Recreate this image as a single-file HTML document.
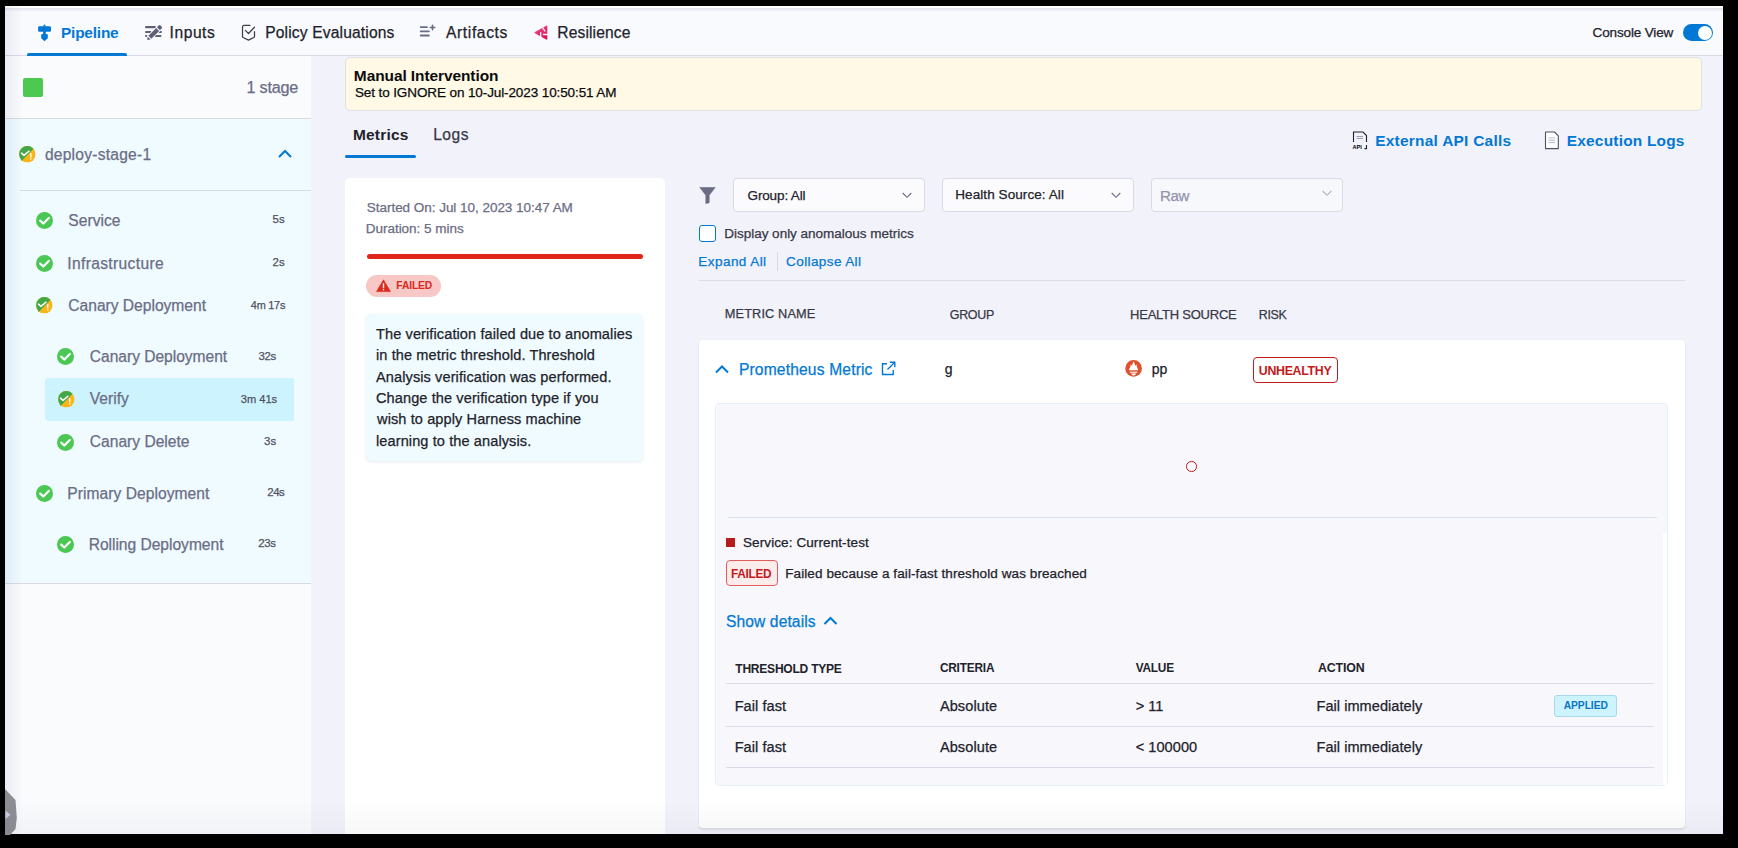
<!DOCTYPE html>
<html><head><meta charset="utf-8">
<style>
*{box-sizing:border-box;margin:0;padding:0}
html,body{width:1738px;height:848px;overflow:hidden;background:#000;font-family:"Liberation Sans",sans-serif}
.a{position:absolute;white-space:nowrap}
.r{position:absolute}
svg{position:absolute;overflow:visible}
</style></head>
<body>
<!-- app background -->
<div class="r" style="left:5px;top:6px;width:1718px;height:828px;background:#f2f2fb"></div>
<!-- nav -->
<div class="r" style="left:5px;top:6px;width:1718px;height:50px;background:#f9fafd;border-bottom:1px solid #d9dae5"></div>
<div class="r" style="left:5px;top:6px;width:1718px;height:2px;background:#fff"></div>
<div class="r" style="left:5px;top:8px;width:1718px;height:2.5px;background:linear-gradient(#e0e1ea,#f3f4f9)"></div>
<div class="r" style="left:27px;top:53px;width:100px;height:3px;background:#0278d5;border-radius:2px 2px 0 0"></div>
<!-- pipeline icon -->
<svg style="left:37px;top:24px" width="15" height="18" viewBox="0 0 15 18">
 <g fill="#0278d5">
 <path d="M5.7 2.4L7.45 0.3L9.2 2.4z"/>
 <rect x="1.1" y="2.2" width="12.9" height="5.6" rx="1.3"/>
 <rect x="6.1" y="7" width="2.7" height="4"/>
 <path d="M5.5 10H9.5Q10.8 10 10.8 11.3V14.3L7.45 17.3L4.2 14.3V11.3Q4.2 10 5.5 10z"/>
 </g>
</svg>
<!-- inputs icon -->
<svg style="left:144px;top:25px" width="19" height="16" viewBox="0 0 19 16">
 <g fill="#5f6078">
 <rect x="1" y="1" width="11" height="2.3" rx="1.1"/>
 <rect x="1" y="6" width="6.5" height="1.9" rx="0.9"/>
 <rect x="14.5" y="6" width="3.5" height="1.9" rx="0.9"/>
 <rect x="1" y="10" width="3" height="1.9" rx="0.9"/>
 <rect x="10.5" y="10" width="7" height="1.9" rx="0.9"/>
 </g>
 <g transform="translate(10.3 7.9) rotate(-45)" fill="#5f6078" stroke="#f9fafd" stroke-width="1.6" paint-order="stroke fill">
  <path d="M-10 0L-7.2 -2.1V2.1z"/>
  <rect x="-6.3" y="-2.1" width="11.2" height="4.2"/>
  <rect x="5.8" y="-2.1" width="3.8" height="4.2" rx="1"/>
 </g>
</svg>
<!-- policy icon -->
<svg style="left:241px;top:24px" width="16" height="18" viewBox="0 0 16 18">
 <path d="M9 1.4H3.2Q1.5 1.4 1.5 3.1V12.4Q1.5 13.1 2.2 13.5L7.5 16.1L12.8 13.5Q13.5 13.1 13.5 12.4V7.6" fill="none" stroke="#3d3e4d" stroke-width="1.25" stroke-linejoin="round" stroke-linecap="round"/>
 <path d="M4.3 6.4l3.2 3.1 6-6.3" fill="none" stroke="#3d3e4d" stroke-width="1.25" stroke-linecap="round" stroke-linejoin="round"/>
</svg>
<!-- artifacts icon -->
<svg style="left:419px;top:24px" width="18" height="14" viewBox="0 0 18 14">
 <g fill="#6b6d85">
 <rect x="0.8" y="2.3" width="8" height="1.8" rx="0.9"/>
 <rect x="0.8" y="6.4" width="10" height="1.8" rx="0.9"/>
 <rect x="0.8" y="10.6" width="10" height="1.8" rx="0.9"/>
 <rect x="12.7" y="0.5" width="1.6" height="6" rx="0.8"/>
 <rect x="10.5" y="2.7" width="6" height="1.6" rx="0.8"/>
 </g>
</svg>
<!-- resilience icon -->
<svg style="left:534px;top:25px" width="15" height="16" viewBox="0 0 15 16">
 <defs><linearGradient id="rg" x1="0" y1="0" x2="0.6" y2="1"><stop offset="0" stop-color="#f05a95"/><stop offset="1" stop-color="#dc0f55"/></linearGradient></defs>
 <path d="M12.2 0.7Q13.3 0.2 13.3 1.4V14Q13.3 15.2 12.2 14.6L0.9 8.3Q0 7.6 0.9 7z" fill="url(#rg)"/>
 <path d="M8.4 2.4L11.2 6.5M8.9 9.5H14M6.7 7.3V12.5" stroke="#f9fafd" stroke-width="1.3" fill="none"/>
</svg>
<!-- console toggle -->
<div class="r" style="left:1683px;top:24px;width:30px;height:17px;border-radius:9px;background:#0278d5"></div>
<div class="r" style="left:1697.5px;top:25.5px;width:14px;height:14px;border-radius:50%;background:#fff"></div>

<!-- left panel -->
<div class="r" style="left:5px;top:56px;width:306px;height:778px;background:#fafbfd"></div>
<div class="r" style="left:5px;top:118px;width:306px;height:1px;background:#d9dae5"></div>
<div class="r" style="left:5px;top:119px;width:306px;height:464px;background:#effbff"></div>
<div class="r" style="left:5px;top:583px;width:306px;height:1px;background:#d9dae5"></div>
<div class="r" style="left:20px;top:189.5px;width:291px;height:1.5px;background:#d4dde3"></div>
<div class="r" style="left:23px;top:78px;width:19.5px;height:19px;border-radius:2px;background:#4dc952"></div>
<!-- chevron up -->
<svg style="left:277px;top:148px" width="16" height="12" viewBox="0 0 16 12">
 <path d="M2 9l6-6 6 6" fill="none" stroke="#0278d5" stroke-width="2"/>
</svg>
<!-- verify highlight -->
<div class="r" style="left:44.5px;top:378px;width:249.5px;height:43px;background:#cdf4fe;border-radius:4px 0 0 4px"></div>
<svg style="left:19.10px;top:146.00px" width="16.6" height="16.6" viewBox="0 0 17 17"><defs><clipPath id="c27154"><circle cx="8.5" cy="8.5" r="8.5"/></clipPath></defs><g clip-path="url(#c27154)"><rect width="17" height="17" fill="#fcb519"/><path d="M0 0H17.6L0.6 17.6z" fill="#41a846"/></g><path d="M2.6 7.3l2.5 2.3 5.2-4.3" fill="none" stroke="#fff" stroke-width="1.5" stroke-linecap="round" stroke-linejoin="round"/><rect x="11.3" y="7.2" width="1.5" height="4.6" fill="#fff" opacity="0.9"/><rect x="11.3" y="12.6" width="1.5" height="1.4" fill="#fff" opacity="0.9"/></svg>
<svg style="left:36.00px;top:212.00px" width="17" height="17" viewBox="0 0 17 17"><circle cx="8.5" cy="8.5" r="8.5" fill="#4bc753"/><path d="M4.2 8.6l3.1 2.9 5.5-5.6" fill="none" stroke="#fff" stroke-width="2.2" stroke-linecap="round" stroke-linejoin="round"/></svg>
<svg style="left:36.00px;top:254.70px" width="17" height="17" viewBox="0 0 17 17"><circle cx="8.5" cy="8.5" r="8.5" fill="#4bc753"/><path d="M4.2 8.6l3.1 2.9 5.5-5.6" fill="none" stroke="#fff" stroke-width="2.2" stroke-linecap="round" stroke-linejoin="round"/></svg>
<svg style="left:36.20px;top:297.20px" width="16.6" height="16.6" viewBox="0 0 17 17"><defs><clipPath id="c44305"><circle cx="8.5" cy="8.5" r="8.5"/></clipPath></defs><g clip-path="url(#c44305)"><rect width="17" height="17" fill="#fcb519"/><path d="M0 0H17.6L0.6 17.6z" fill="#41a846"/></g><path d="M2.6 7.3l2.5 2.3 5.2-4.3" fill="none" stroke="#fff" stroke-width="1.5" stroke-linecap="round" stroke-linejoin="round"/><rect x="11.3" y="7.2" width="1.5" height="4.6" fill="#fff" opacity="0.9"/><rect x="11.3" y="12.6" width="1.5" height="1.4" fill="#fff" opacity="0.9"/></svg>
<svg style="left:57.30px;top:348.30px" width="17" height="17" viewBox="0 0 17 17"><circle cx="8.5" cy="8.5" r="8.5" fill="#4bc753"/><path d="M4.2 8.6l3.1 2.9 5.5-5.6" fill="none" stroke="#fff" stroke-width="2.2" stroke-linecap="round" stroke-linejoin="round"/></svg>
<svg style="left:57.70px;top:391.20px" width="16.6" height="16.6" viewBox="0 0 17 17"><defs><clipPath id="c66399"><circle cx="8.5" cy="8.5" r="8.5"/></clipPath></defs><g clip-path="url(#c66399)"><rect width="17" height="17" fill="#fcb519"/><path d="M0 0H17.6L0.6 17.6z" fill="#41a846"/></g><path d="M2.6 7.3l2.5 2.3 5.2-4.3" fill="none" stroke="#fff" stroke-width="1.5" stroke-linecap="round" stroke-linejoin="round"/><rect x="11.3" y="7.2" width="1.5" height="4.6" fill="#fff" opacity="0.9"/><rect x="11.3" y="12.6" width="1.5" height="1.4" fill="#fff" opacity="0.9"/></svg>
<svg style="left:57.30px;top:433.70px" width="17" height="17" viewBox="0 0 17 17"><circle cx="8.5" cy="8.5" r="8.5" fill="#4bc753"/><path d="M4.2 8.6l3.1 2.9 5.5-5.6" fill="none" stroke="#fff" stroke-width="2.2" stroke-linecap="round" stroke-linejoin="round"/></svg>
<svg style="left:36.00px;top:484.70px" width="17" height="17" viewBox="0 0 17 17"><circle cx="8.5" cy="8.5" r="8.5" fill="#4bc753"/><path d="M4.2 8.6l3.1 2.9 5.5-5.6" fill="none" stroke="#fff" stroke-width="2.2" stroke-linecap="round" stroke-linejoin="round"/></svg>
<svg style="left:57.10px;top:535.80px" width="17" height="17" viewBox="0 0 17 17"><circle cx="8.5" cy="8.5" r="8.5" fill="#4bc753"/><path d="M4.2 8.6l3.1 2.9 5.5-5.6" fill="none" stroke="#fff" stroke-width="2.2" stroke-linecap="round" stroke-linejoin="round"/></svg>

<!-- main: banner -->
<div class="r" style="left:345px;top:57px;width:1356.5px;height:54px;background:#fff9e6;border:1px solid #e2e0e3;border-radius:5px"></div>
<div class="r" style="left:345px;top:155px;width:71px;height:2.5px;background:#0278d5;border-radius:2px"></div>
<!-- left card -->
<div class="r" style="left:345px;top:178px;width:320px;height:656px;background:#fff;border-radius:5px 5px 0 0"></div>
<div class="r" style="left:366.5px;top:254px;width:276.5px;height:4.5px;background:#e0261b;border-radius:3px"></div>
<div class="r" style="left:366px;top:275px;width:75px;height:22px;background:#f8c8c6;border-radius:11px"></div>
<svg style="left:376px;top:279px" width="15" height="13" viewBox="0 0 15 13">
 <path d="M7.5 0.8L14.5 12.6H0.5z" fill="#da291d" stroke="#da291d" stroke-width="0.6" stroke-linejoin="round"/>
 <rect x="6.8" y="4.3" width="1.4" height="4.6" fill="#fff"/><rect x="6.8" y="9.8" width="1.4" height="1.5" fill="#fff"/>
</svg>
<div class="r" style="left:366px;top:314px;width:277px;height:147px;background:#effbff;border-radius:5px;box-shadow:0 1px 3px rgba(60,70,90,0.12)"></div>

<!-- right: links -->
<svg style="left:1352px;top:131px" width="16" height="19" viewBox="0 0 16 19">
 <path d="M1.5 11V1h9.5l3.5 3.5V11" fill="none" stroke="#22222a" stroke-width="1.1"/>
 <path d="M14.5 14v3.6H12.5" fill="none" stroke="#22222a" stroke-width="1.1"/>
 <path d="M4.5 5.5h6.5M4.5 7.5h6.5" stroke="#9293ab" stroke-width="0.9"/>
 <text x="0.5" y="17.6" font-size="5.6" font-weight="700" font-family="Liberation Sans" fill="#000">API</text>
</svg>
<svg style="left:1544px;top:131px" width="16" height="19" viewBox="0 0 16 19">
 <path d="M1.5 1h9l3.8 3.8V17.6H1.5z" fill="#fff" stroke="#4f5162" stroke-width="1.1" stroke-linejoin="round"/>
 <path d="M4.5 7h6.5M4.5 9.3h6.5M4.5 11.6h6.5" stroke="#b0b1c4" stroke-width="0.9"/>
</svg>
<!-- filter icon -->
<svg style="left:699px;top:187px" width="17" height="17" viewBox="0 0 17 17">
 <path d="M0.8 0.5h15.4L10.2 8.2v7.6l-3.4 0.8V8.2z" fill="#6b6d85" stroke="#6b6d85" stroke-width="0.6" stroke-linejoin="round"/>
</svg>
<!-- dropdowns -->
<div class="r" style="left:733px;top:178px;width:192px;height:34px;background:#fbfbfe;border:1px solid #d9dae5;border-radius:4px;box-shadow:0 0 1px rgba(40,41,61,0.04)"></div>
<div class="r" style="left:942px;top:178px;width:192px;height:34px;background:#fbfbfe;border:1px solid #d9dae5;border-radius:4px"></div>
<div class="r" style="left:1151px;top:178px;width:192px;height:34px;background:#f7f8fc;border:1px solid #d9dae5;border-radius:4px"></div>
<svg style="left:902px;top:192px" width="10" height="7" viewBox="0 0 10 7"><path d="M0.7 1l4.3 4.3L9.3 1" fill="none" stroke="#6b6d85" stroke-width="1.1"/></svg>
<svg style="left:1111px;top:192px" width="10" height="7" viewBox="0 0 10 7"><path d="M0.7 1l4.3 4.3L9.3 1" fill="none" stroke="#6b6d85" stroke-width="1.1"/></svg>
<svg style="left:1322px;top:190px" width="10" height="7" viewBox="0 0 10 7"><path d="M0.7 1l4.3 4.3L9.3 1" fill="none" stroke="#b0b1c4" stroke-width="1.1"/></svg>
<!-- checkbox -->
<div class="r" style="left:699px;top:225px;width:17px;height:17px;border:1.5px solid #0278d5;border-radius:3px;background:#fff"></div>
<div class="r" style="left:776.5px;top:252px;width:1px;height:19px;background:#d9dae5"></div>
<div class="r" style="left:699px;top:280px;width:986px;height:1.2px;background:#dcdce8"></div>

<!-- metric card -->
<div class="r" style="left:699px;top:340px;width:986px;height:488px;background:#fff;border-radius:4px;box-shadow:0 0 1px rgba(40,41,61,0.08),0 1.5px 2px rgba(96,97,112,0.14)"></div>
<svg style="left:714px;top:363px" width="16" height="12" viewBox="0 0 16 12">
 <path d="M2 9.5l6-6 6 6" fill="none" stroke="#0278d5" stroke-width="2"/>
</svg>
<svg style="left:881px;top:361px" width="15" height="15" viewBox="0 0 15 15">
 <path d="M6 2.8H1.5v10.7h10.7V9" fill="none" stroke="#0278d5" stroke-width="1.4"/>
 <path d="M6.5 8.5L13.5 1.5M8.8 1.2h5v5" fill="none" stroke="#0278d5" stroke-width="1.4"/>
</svg>
<!-- prometheus icon -->
<svg style="left:1125px;top:360px" width="18" height="18" viewBox="0 0 18 18">
 <circle cx="8.6" cy="8.4" r="8.3" fill="#e0502c"/>
 <path d="M4.1 10.3C4.1 8.6 5.1 7.9 5.4 6.6L5.8 4.3C6.4 5 6.7 5.5 6.9 6.1C7.2 4.6 7.8 2.8 8.6 1.2C9.4 2.8 10 4.6 10.3 6.1C10.5 5.5 10.8 5 11.4 4.3L11.8 6.6C12.1 7.9 13.1 8.6 13.1 10.3z" fill="#fff"/>
 <rect x="4.8" y="11.7" width="7.6" height="1.1" fill="#fff"/>
 <path d="M6.2 13.6h4.8c-0.2 1.2-1.2 1.9-2.4 1.9s-2.2-0.7-2.4-1.9z" fill="#fff"/>
</svg>
<div class="r" style="left:1253px;top:357px;width:85px;height:25.5px;border:1.3px solid #c41a1a;border-radius:4px;background:#fff"></div>
<!-- grey inner panel -->
<div class="r" style="left:715px;top:403px;width:953px;height:383px;background:#f7f7fc;border:1px solid #e3f2f9;border-radius:4px"></div>
<div class="r" style="left:727.5px;top:516.5px;width:929px;height:1px;background:#d5e3f0"></div>
<div class="r" style="left:1186px;top:461px;width:10.5px;height:10.5px;border:1.3px solid #c41a1a;border-radius:50%"></div>
<div class="r" style="left:726px;top:538px;width:8.5px;height:8.5px;background:#b71c1c"></div>
<div class="r" style="left:725.5px;top:560px;width:52px;height:25.5px;border:1.3px solid #e25c5c;border-radius:4px;background:#fdecec"></div>
<svg style="left:823px;top:615px" width="15" height="11" viewBox="0 0 15 11">
 <path d="M1.5 9l6-6 6 6" fill="none" stroke="#0278d5" stroke-width="2"/>
</svg>
<div class="r" style="left:1663px;top:532.5px;width:4px;height:252px;background:#fff"></div>
<div class="r" style="left:726px;top:683.2px;width:928px;height:1.2px;background:#dcdde8"></div>
<div class="r" style="left:726px;top:725.8px;width:928px;height:1.2px;background:#dcdde8"></div>
<div class="r" style="left:726px;top:766.8px;width:928px;height:1.4px;background:#d9dae5"></div>
<div class="r" style="left:1553.5px;top:694.5px;width:63px;height:22.5px;background:#cdf4fe;border:1px solid #a8d8ee;border-radius:3px"></div>

<!-- left edge shadow -->
<div class="r" style="left:5px;top:6px;width:18px;height:828px;background:linear-gradient(to right,rgba(40,50,110,0.07),rgba(40,50,110,0))"></div>
<!-- bottom-left widget -->
<svg style="left:5px;top:788.5px" width="13" height="46" viewBox="0 0 13 46">
 <path d="M0 0l10.5 11 1.3 18-1.3 11-5.5 6H0z" fill="#8d8d94"/>
 <path d="M0.5 21.5l5 4.2-5 4.2z" fill="#c7c9dc"/>
</svg>
<div class="r" style="left:5px;top:800px;width:1718px;height:34px;background:linear-gradient(rgba(30,30,60,0),rgba(30,30,60,0.035))"></div>
<div class="a" style="left:60.97px;top:24.82px;font-size:15.45px;line-height:15.45px;color:#0278d5;font-weight:700;letter-spacing:-0.209px;">Pipeline</div>
<div class="a" style="left:169.56px;top:24.69px;font-size:15.60px;line-height:15.60px;color:#22222a;-webkit-text-stroke:0.25px currentColor;letter-spacing:0.553px;">Inputs</div>
<div class="a" style="left:265.16px;top:24.69px;font-size:15.60px;line-height:15.60px;color:#22222a;-webkit-text-stroke:0.25px currentColor;letter-spacing:0.157px;">Policy Evaluations</div>
<div class="a" style="left:446.00px;top:24.69px;font-size:15.60px;line-height:15.60px;color:#22222a;-webkit-text-stroke:0.25px currentColor;letter-spacing:0.622px;">Artifacts</div>
<div class="a" style="left:557.26px;top:24.69px;font-size:15.60px;line-height:15.60px;color:#22222a;-webkit-text-stroke:0.25px currentColor;letter-spacing:0.137px;">Resilience</div>
<div class="a" style="left:1592.60px;top:25.65px;font-size:13.52px;line-height:13.52px;color:#22222a;-webkit-text-stroke:0.25px currentColor;letter-spacing:-0.151px;">Console View</div>
<div class="a" style="left:246.46px;top:79.06px;font-size:16.22px;line-height:16.22px;color:#6b6d85;-webkit-text-stroke:0.25px currentColor;letter-spacing:-0.210px;">1 stage</div>
<div class="a" style="left:44.90px;top:146.99px;font-size:15.60px;line-height:15.60px;color:#6b6d85;-webkit-text-stroke:0.25px currentColor;letter-spacing:0.235px;">deploy-stage-1</div>
<div class="a" style="left:68.30px;top:213.39px;font-size:15.60px;line-height:15.60px;color:#6b6d85;-webkit-text-stroke:0.25px currentColor;letter-spacing:0.023px;">Service</div>
<div class="a" style="left:67.26px;top:255.69px;font-size:15.60px;line-height:15.60px;color:#6b6d85;-webkit-text-stroke:0.25px currentColor;letter-spacing:0.346px;">Infrastructure</div>
<div class="a" style="left:68.30px;top:297.59px;font-size:15.60px;line-height:15.60px;color:#6b6d85;-webkit-text-stroke:0.25px currentColor;letter-spacing:-0.008px;">Canary Deployment</div>
<div class="a" style="left:89.80px;top:349.49px;font-size:15.60px;line-height:15.60px;color:#6b6d85;-webkit-text-stroke:0.25px currentColor;letter-spacing:-0.027px;">Canary Deployment</div>
<div class="a" style="left:89.80px;top:391.39px;font-size:15.60px;line-height:15.60px;color:#6b6d85;-webkit-text-stroke:0.25px currentColor;letter-spacing:0.013px;">Verify</div>
<div class="a" style="left:89.80px;top:434.19px;font-size:15.60px;line-height:15.60px;color:#6b6d85;-webkit-text-stroke:0.25px currentColor;">Canary Delete</div>
<div class="a" style="left:67.36px;top:486.19px;font-size:15.60px;line-height:15.60px;color:#6b6d85;-webkit-text-stroke:0.25px currentColor;letter-spacing:0.039px;">Primary Deployment</div>
<div class="a" style="left:88.66px;top:537.09px;font-size:15.60px;line-height:15.60px;color:#6b6d85;-webkit-text-stroke:0.25px currentColor;letter-spacing:-0.023px;">Rolling Deployment</div>
<div class="a" style="left:272.60px;top:214.41px;font-size:11.44px;line-height:11.44px;color:#4f5162;-webkit-text-stroke:0.25px currentColor;">5s</div>
<div class="a" style="left:272.60px;top:257.01px;font-size:11.44px;line-height:11.44px;color:#4f5162;-webkit-text-stroke:0.25px currentColor;">2s</div>
<div class="a" style="left:250.80px;top:299.85px;font-size:10.92px;line-height:10.92px;color:#4f5162;-webkit-text-stroke:0.25px currentColor;letter-spacing:-0.230px;">4m 17s</div>
<div class="a" style="left:258.40px;top:350.71px;font-size:11.44px;line-height:11.44px;color:#4f5162;-webkit-text-stroke:0.25px currentColor;letter-spacing:-0.332px;">32s</div>
<div class="a" style="left:240.80px;top:393.68px;font-size:11.13px;line-height:11.13px;color:#4f5162;-webkit-text-stroke:0.25px currentColor;letter-spacing:-0.038px;">3m 41s</div>
<div class="a" style="left:264.10px;top:435.81px;font-size:11.44px;line-height:11.44px;color:#4f5162;-webkit-text-stroke:0.25px currentColor;">3s</div>
<div class="a" style="left:267.30px;top:487.21px;font-size:11.44px;line-height:11.44px;color:#4f5162;-webkit-text-stroke:0.25px currentColor;letter-spacing:-0.482px;">24s</div>
<div class="a" style="left:258.30px;top:538.41px;font-size:11.44px;line-height:11.44px;color:#4f5162;-webkit-text-stroke:0.25px currentColor;letter-spacing:-0.332px;">23s</div>
<div class="a" style="left:353.87px;top:68.32px;font-size:15.45px;line-height:15.45px;color:#0b0b0d;font-weight:700;letter-spacing:-0.068px;">Manual Intervention</div>
<div class="a" style="left:354.90px;top:86.45px;font-size:13.52px;line-height:13.52px;color:#0b0b0d;-webkit-text-stroke:0.25px currentColor;letter-spacing:-0.111px;">Set to IGNORE on 10-Jul-2023 10:50:51 AM</div>
<div class="a" style="left:352.97px;top:126.92px;font-size:15.45px;line-height:15.45px;color:#22222a;font-weight:700;letter-spacing:0.214px;">Metrics</div>
<div class="a" style="left:433.16px;top:126.79px;font-size:15.60px;line-height:15.60px;color:#383946;-webkit-text-stroke:0.25px currentColor;letter-spacing:0.511px;">Logs</div>
<div class="a" style="left:366.80px;top:201.05px;font-size:13.52px;line-height:13.52px;color:#6b6d85;-webkit-text-stroke:0.25px currentColor;letter-spacing:-0.041px;">Started On: Jul 10, 2023 10:47 AM</div>
<div class="a" style="left:365.76px;top:222.05px;font-size:13.52px;line-height:13.52px;color:#6b6d85;-webkit-text-stroke:0.25px currentColor;letter-spacing:-0.034px;">Duration: 5 mins</div>
<div class="a" style="left:396.30px;top:281.38px;font-size:10.30px;line-height:10.30px;color:#da291d;font-weight:700;letter-spacing:-0.139px;">FAILED</div>
<div class="a" style="left:376.00px;top:327.07px;font-size:14.56px;line-height:14.56px;color:#22222a;-webkit-text-stroke:0.25px currentColor;letter-spacing:0.100px;">The verification failed due to anomalies</div>
<div class="a" style="left:376.00px;top:348.37px;font-size:14.56px;line-height:14.56px;color:#22222a;-webkit-text-stroke:0.25px currentColor;letter-spacing:0.100px;">in the metric threshold. Threshold</div>
<div class="a" style="left:376.00px;top:369.67px;font-size:14.56px;line-height:14.56px;color:#22222a;-webkit-text-stroke:0.25px currentColor;letter-spacing:0.100px;">Analysis verification was performed.</div>
<div class="a" style="left:376.00px;top:390.97px;font-size:14.56px;line-height:14.56px;color:#22222a;-webkit-text-stroke:0.25px currentColor;letter-spacing:0.100px;">Change the verification type if you</div>
<div class="a" style="left:377.04px;top:412.27px;font-size:14.56px;line-height:14.56px;color:#22222a;-webkit-text-stroke:0.25px currentColor;letter-spacing:0.100px;">wish to apply Harness machine</div>
<div class="a" style="left:376.00px;top:433.57px;font-size:14.56px;line-height:14.56px;color:#22222a;-webkit-text-stroke:0.25px currentColor;letter-spacing:0.100px;">learning to the analysis.</div>
<div class="a" style="left:1375.17px;top:132.92px;font-size:15.45px;line-height:15.45px;color:#0278d5;font-weight:700;letter-spacing:0.261px;">External API Calls</div>
<div class="a" style="left:1566.77px;top:132.92px;font-size:15.45px;line-height:15.45px;color:#0278d5;font-weight:700;letter-spacing:0.212px;">Execution Logs</div>
<div class="a" style="left:747.50px;top:188.55px;font-size:13.52px;line-height:13.52px;color:#22222a;-webkit-text-stroke:0.25px currentColor;letter-spacing:-0.137px;">Group: All</div>
<div class="a" style="left:955.26px;top:188.05px;font-size:13.52px;line-height:13.52px;color:#22222a;-webkit-text-stroke:0.25px currentColor;letter-spacing:0.071px;">Health Source: All</div>
<div class="a" style="left:1159.96px;top:188.43px;font-size:15.08px;line-height:15.08px;color:#9293ab;-webkit-text-stroke:0.25px currentColor;letter-spacing:-0.339px;">Raw</div>
<div class="a" style="left:724.16px;top:226.65px;font-size:13.52px;line-height:13.52px;color:#383946;-webkit-text-stroke:0.25px currentColor;letter-spacing:-0.013px;">Display only anomalous metrics</div>
<div class="a" style="left:698.36px;top:254.75px;font-size:13.52px;line-height:13.52px;color:#0278d5;-webkit-text-stroke:0.25px currentColor;letter-spacing:0.432px;">Expand All</div>
<div class="a" style="left:786.10px;top:254.75px;font-size:13.52px;line-height:13.52px;color:#0278d5;-webkit-text-stroke:0.25px currentColor;letter-spacing:0.390px;">Collapse All</div>
<div class="a" style="left:724.86px;top:308.47px;font-size:12.79px;line-height:12.79px;color:#383946;-webkit-text-stroke:0.25px currentColor;letter-spacing:0.093px;">METRIC NAME</div>
<div class="a" style="left:949.80px;top:308.73px;font-size:12.48px;line-height:12.48px;color:#383946;-webkit-text-stroke:0.25px currentColor;letter-spacing:-0.315px;">GROUP</div>
<div class="a" style="left:1130.06px;top:308.29px;font-size:13.00px;line-height:13.00px;color:#383946;-webkit-text-stroke:0.25px currentColor;letter-spacing:-0.239px;">HEALTH SOURCE</div>
<div class="a" style="left:1258.80px;top:308.73px;font-size:12.48px;line-height:12.48px;color:#383946;-webkit-text-stroke:0.25px currentColor;letter-spacing:-0.375px;">RISK</div>
<div class="a" style="left:738.96px;top:362.19px;font-size:15.60px;line-height:15.60px;color:#0278d5;-webkit-text-stroke:0.25px currentColor;letter-spacing:0.163px;">Prometheus Metric</div>
<div class="a" style="left:944.80px;top:362.41px;font-size:14.04px;line-height:14.04px;color:#22222a;-webkit-text-stroke:0.25px currentColor;">g</div>
<div class="a" style="left:1151.80px;top:362.41px;font-size:14.04px;line-height:14.04px;color:#22222a;-webkit-text-stroke:0.25px currentColor;">pp</div>
<div class="a" style="left:1258.80px;top:365.33px;font-size:12.36px;line-height:12.36px;color:#c41a1a;font-weight:700;letter-spacing:-0.300px;">UNHEALTHY</div>
<div class="a" style="left:743.00px;top:535.75px;font-size:13.52px;line-height:13.52px;color:#22222a;-webkit-text-stroke:0.25px currentColor;letter-spacing:0.091px;">Service: Current-test</div>
<div class="a" style="left:731.10px;top:569.17px;font-size:11.85px;line-height:11.85px;color:#c41a1a;font-weight:700;letter-spacing:-0.321px;">FAILED</div>
<div class="a" style="left:785.26px;top:566.85px;font-size:13.52px;line-height:13.52px;color:#22222a;-webkit-text-stroke:0.25px currentColor;letter-spacing:0.083px;">Failed because a fail-fast threshold was breached</div>
<div class="a" style="left:726.00px;top:613.89px;font-size:15.60px;line-height:15.60px;color:#0278d5;-webkit-text-stroke:0.25px currentColor;letter-spacing:0.106px;">Show details</div>
<div class="a" style="left:735.30px;top:662.60px;font-size:12.05px;line-height:12.05px;color:#22222a;font-weight:700;letter-spacing:-0.246px;">THRESHOLD TYPE</div>
<div class="a" style="left:939.90px;top:662.77px;font-size:11.85px;line-height:11.85px;color:#22222a;font-weight:700;letter-spacing:-0.189px;">CRITERIA</div>
<div class="a" style="left:1135.70px;top:662.77px;font-size:11.85px;line-height:11.85px;color:#22222a;font-weight:700;letter-spacing:-0.226px;">VALUE</div>
<div class="a" style="left:1318.00px;top:662.33px;font-size:12.36px;line-height:12.36px;color:#22222a;font-weight:700;letter-spacing:-0.138px;">ACTION</div>
<div class="a" style="left:734.66px;top:699.17px;font-size:14.56px;line-height:14.56px;color:#22222a;-webkit-text-stroke:0.25px currentColor;letter-spacing:0.069px;">Fail fast</div>
<div class="a" style="left:939.90px;top:699.17px;font-size:14.56px;line-height:14.56px;color:#22222a;-webkit-text-stroke:0.25px currentColor;letter-spacing:0.088px;">Absolute</div>
<div class="a" style="left:1135.70px;top:699.17px;font-size:14.56px;line-height:14.56px;color:#22222a;-webkit-text-stroke:0.25px currentColor;">&gt; 11</div>
<div class="a" style="left:1316.46px;top:699.17px;font-size:14.56px;line-height:14.56px;color:#22222a;-webkit-text-stroke:0.25px currentColor;letter-spacing:0.044px;">Fail immediately</div>
<div class="a" style="left:734.66px;top:740.17px;font-size:14.56px;line-height:14.56px;color:#22222a;-webkit-text-stroke:0.25px currentColor;letter-spacing:0.069px;">Fail fast</div>
<div class="a" style="left:939.90px;top:740.17px;font-size:14.56px;line-height:14.56px;color:#22222a;-webkit-text-stroke:0.25px currentColor;letter-spacing:0.088px;">Absolute</div>
<div class="a" style="left:1135.70px;top:740.17px;font-size:14.56px;line-height:14.56px;color:#22222a;-webkit-text-stroke:0.25px currentColor;letter-spacing:0.049px;">&lt; 100000</div>
<div class="a" style="left:1316.46px;top:740.17px;font-size:14.56px;line-height:14.56px;color:#22222a;-webkit-text-stroke:0.25px currentColor;letter-spacing:0.044px;">Fail immediately</div>
<div class="a" style="left:1563.70px;top:701.28px;font-size:10.30px;line-height:10.30px;color:#0b74c5;font-weight:700;letter-spacing:-0.069px;">APPLIED</div>
</body></html>
